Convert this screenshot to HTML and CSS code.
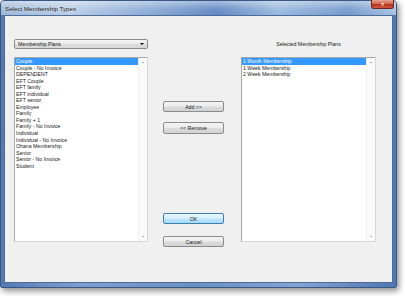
FILE: index.html
```html
<!DOCTYPE html>
<html>
<head>
<meta charset="utf-8">
<link rel="stylesheet" href="styles.css">
</head>
<body>
<div class="window">
  <div class="titlebar">
    <span class="title">Select Membership Types</span>
    <span class="close">&#x2715;</span>
  </div>
  <div class="client">
    <div class="col left">
      <div class="combo"><span>Membership Plans</span><span class="caret"></span></div>
      <div class="listbox">
        <ul class="items">
          <li class="sel">Couple</li>
          <li>Couple - No Invoice</li>
          <li>DEPENDENT</li>
          <li>EFT Couple</li>
          <li>EFT family</li>
          <li>EFT individual</li>
          <li>EFT senior</li>
          <li>Employee</li>
          <li>Family</li>
          <li>Family + 1</li>
          <li>Family - No Invoice</li>
          <li>Individual</li>
          <li>Individual - No Invoice</li>
          <li>Ohana Membership</li>
          <li>Senior</li>
          <li>Senior - No Invoice</li>
          <li>Student</li>
        </ul>
        <div class="scroll"><span class="up"></span><span class="down"></span></div>
      </div>
    </div>
    <div class="col mid">
      <button class="btn add">Add &gt;&gt;</button>
      <button class="btn remove">&lt;&lt; Remove</button>
      <button class="btn ok">OK</button>
      <button class="btn cancel">Cancel</button>
    </div>
    <div class="col right">
      <div class="label">Selected Membership Plans</div>
      <div class="listbox">
        <ul class="items">
          <li class="sel">1 Month Membership</li>
          <li>1 Week Membership</li>
          <li>2 Week Membership</li>
        </ul>
        <div class="scroll"><span class="up"></span><span class="down"></span></div>
      </div>
    </div>
  </div>
</div>
</body>
</html>
```

FILE: styles.css
```css
html, body {
  margin: 0;
  padding: 0;
  background: #ffffff;
  width: 405px;
  height: 296px;
  overflow: hidden;
  font-family: "Liberation Sans", "DejaVu Sans", sans-serif;
}

.window {
  width: 397px;
  height: 288px;
  box-sizing: border-box;
  display: flex;
  flex-direction: column;
  background: linear-gradient(90deg, #5479b3 0%, #7e9fcf 20%, #6a90c6 50%, #84a4d2 75%, #5077b2 100%);
  border: 1px solid #3a5682;
  border-radius: 4px 4px 2px 2px;
  box-shadow: 2px 3px 6px rgba(0, 0, 0, 0.45);
}

.titlebar {
  height: 14px;
  flex: none;
  display: flex;
  align-items: flex-start;
  justify-content: space-between;
  background:
    linear-gradient(180deg, rgba(255,255,255,0.45) 0%, rgba(255,255,255,0.1) 55%, rgba(255,255,255,0) 100%),
    linear-gradient(90deg, #9cb6d8 0%, #b9cce6 18%, #90aed8 35%, #5f88c2 55%, #9ab8de 70%, #7199cc 88%, #aac2e2 100%);
  border-radius: 3px 3px 0 0;
}

.title {
  font-size: 6.2px;
  color: #1b1b1b;
  padding: 4px 0 0 4px;
  text-shadow: 0 0 3px rgba(255,255,255,0.9);
}

.close {
  width: 23px;
  height: 9px;
  margin-right: 2px;
  margin-top: -1px;
  box-sizing: border-box;
  display: flex;
  align-items: center;
  justify-content: center;
  font-size: 5px;
  font-weight: bold;
  color: #ffffff;
  background: linear-gradient(180deg, #e7a090 0%, #d46a54 45%, #b8321d 55%, #cf5a3e 100%);
  border: 1px solid #6a2a20;
  border-top: none;
  border-radius: 0 0 3px 3px;
}

.client {
  flex: 1;
  margin: 0 3px 4px 3px;
  background: #f0f0f0;
  border: 1px solid #4c6d9c;
  box-sizing: border-box;
  display: grid;
  grid-template-columns: 134px 93px 135px;
  align-items: start;
  padding: 23px 0 0 9px;
}

.col {
  display: flex;
  flex-direction: column;
}

.combo {
  height: 10px;
  box-sizing: border-box;
  border: 1px solid #8a8a8a;
  border-radius: 2px;
  background: linear-gradient(180deg, #f5f5f5 0%, #e9e9e9 50%, #dcdcdc 51%, #d6d6d6 100%);
  display: flex;
  align-items: center;
  justify-content: space-between;
  padding: 0 3px 0 3px;
  font-size: 5.2px;
  color: #202020;
}

.caret {
  width: 0;
  height: 0;
  border-left: 2px solid transparent;
  border-right: 2px solid transparent;
  border-top: 2px solid #000;
}

.listbox {
  margin-top: 8px;
  height: 185px;
  box-sizing: border-box;
  border: 1px solid #a8a8a8;
  border-right-color: #d8d8d8;
  border-bottom-color: #d8d8d8;
  background: #ffffff;
  display: flex;
}

.items {
  flex: 1;
  list-style: none;
  margin: 0;
  padding: 0;
  font-size: 5.2px;
  line-height: 6.55px;
  color: #1a1a1a;
}

.items li {
  padding-left: 1px;
  white-space: nowrap;
}

.items li.sel {
  background: #3399ff;
  color: #ffffff;
}

.scroll {
  width: 8px;
  background: #fafafa;
  border-left: 1px solid #f0f0f0;
  display: flex;
  flex-direction: column;
  justify-content: space-between;
  align-items: center;
  padding: 4px 0 4px 0;
}

.up, .down {
  width: 0;
  height: 0;
  border-left: 1.5px solid transparent;
  border-right: 1.5px solid transparent;
}

.up { border-bottom: 1.5px solid #606060; }
.down { border-top: 1.5px solid #606060; }

.mid {
  padding-left: 15px;
}

.btn {
  width: 61px;
  height: 11px;
  box-sizing: border-box;
  margin: 0;
  padding: 0;
  border: 1px solid #8c8c8c;
  border-radius: 2px;
  background: linear-gradient(180deg, #f4f4f4 0%, #ebebeb 48%, #dddddd 52%, #d2d2d2 100%);
  font-family: "Liberation Sans", "DejaVu Sans", sans-serif;
  font-size: 5.2px;
  color: #202020;
}

.add { margin-top: 62px; }
.remove { margin-top: 10px; height: 12px; }
.ok {
  margin-top: 79px;
  border-color: #3c7fb1;
  background: linear-gradient(180deg, #eaf6fd 0%, #d9f0fc 48%, #bee6fd 52%, #a7d9f5 100%);
}
.cancel { margin-top: 12px; }

.right .label {
  height: 10px;
  display: flex;
  align-items: center;
  justify-content: center;
  font-size: 5.2px;
  color: #202020;
}
```
